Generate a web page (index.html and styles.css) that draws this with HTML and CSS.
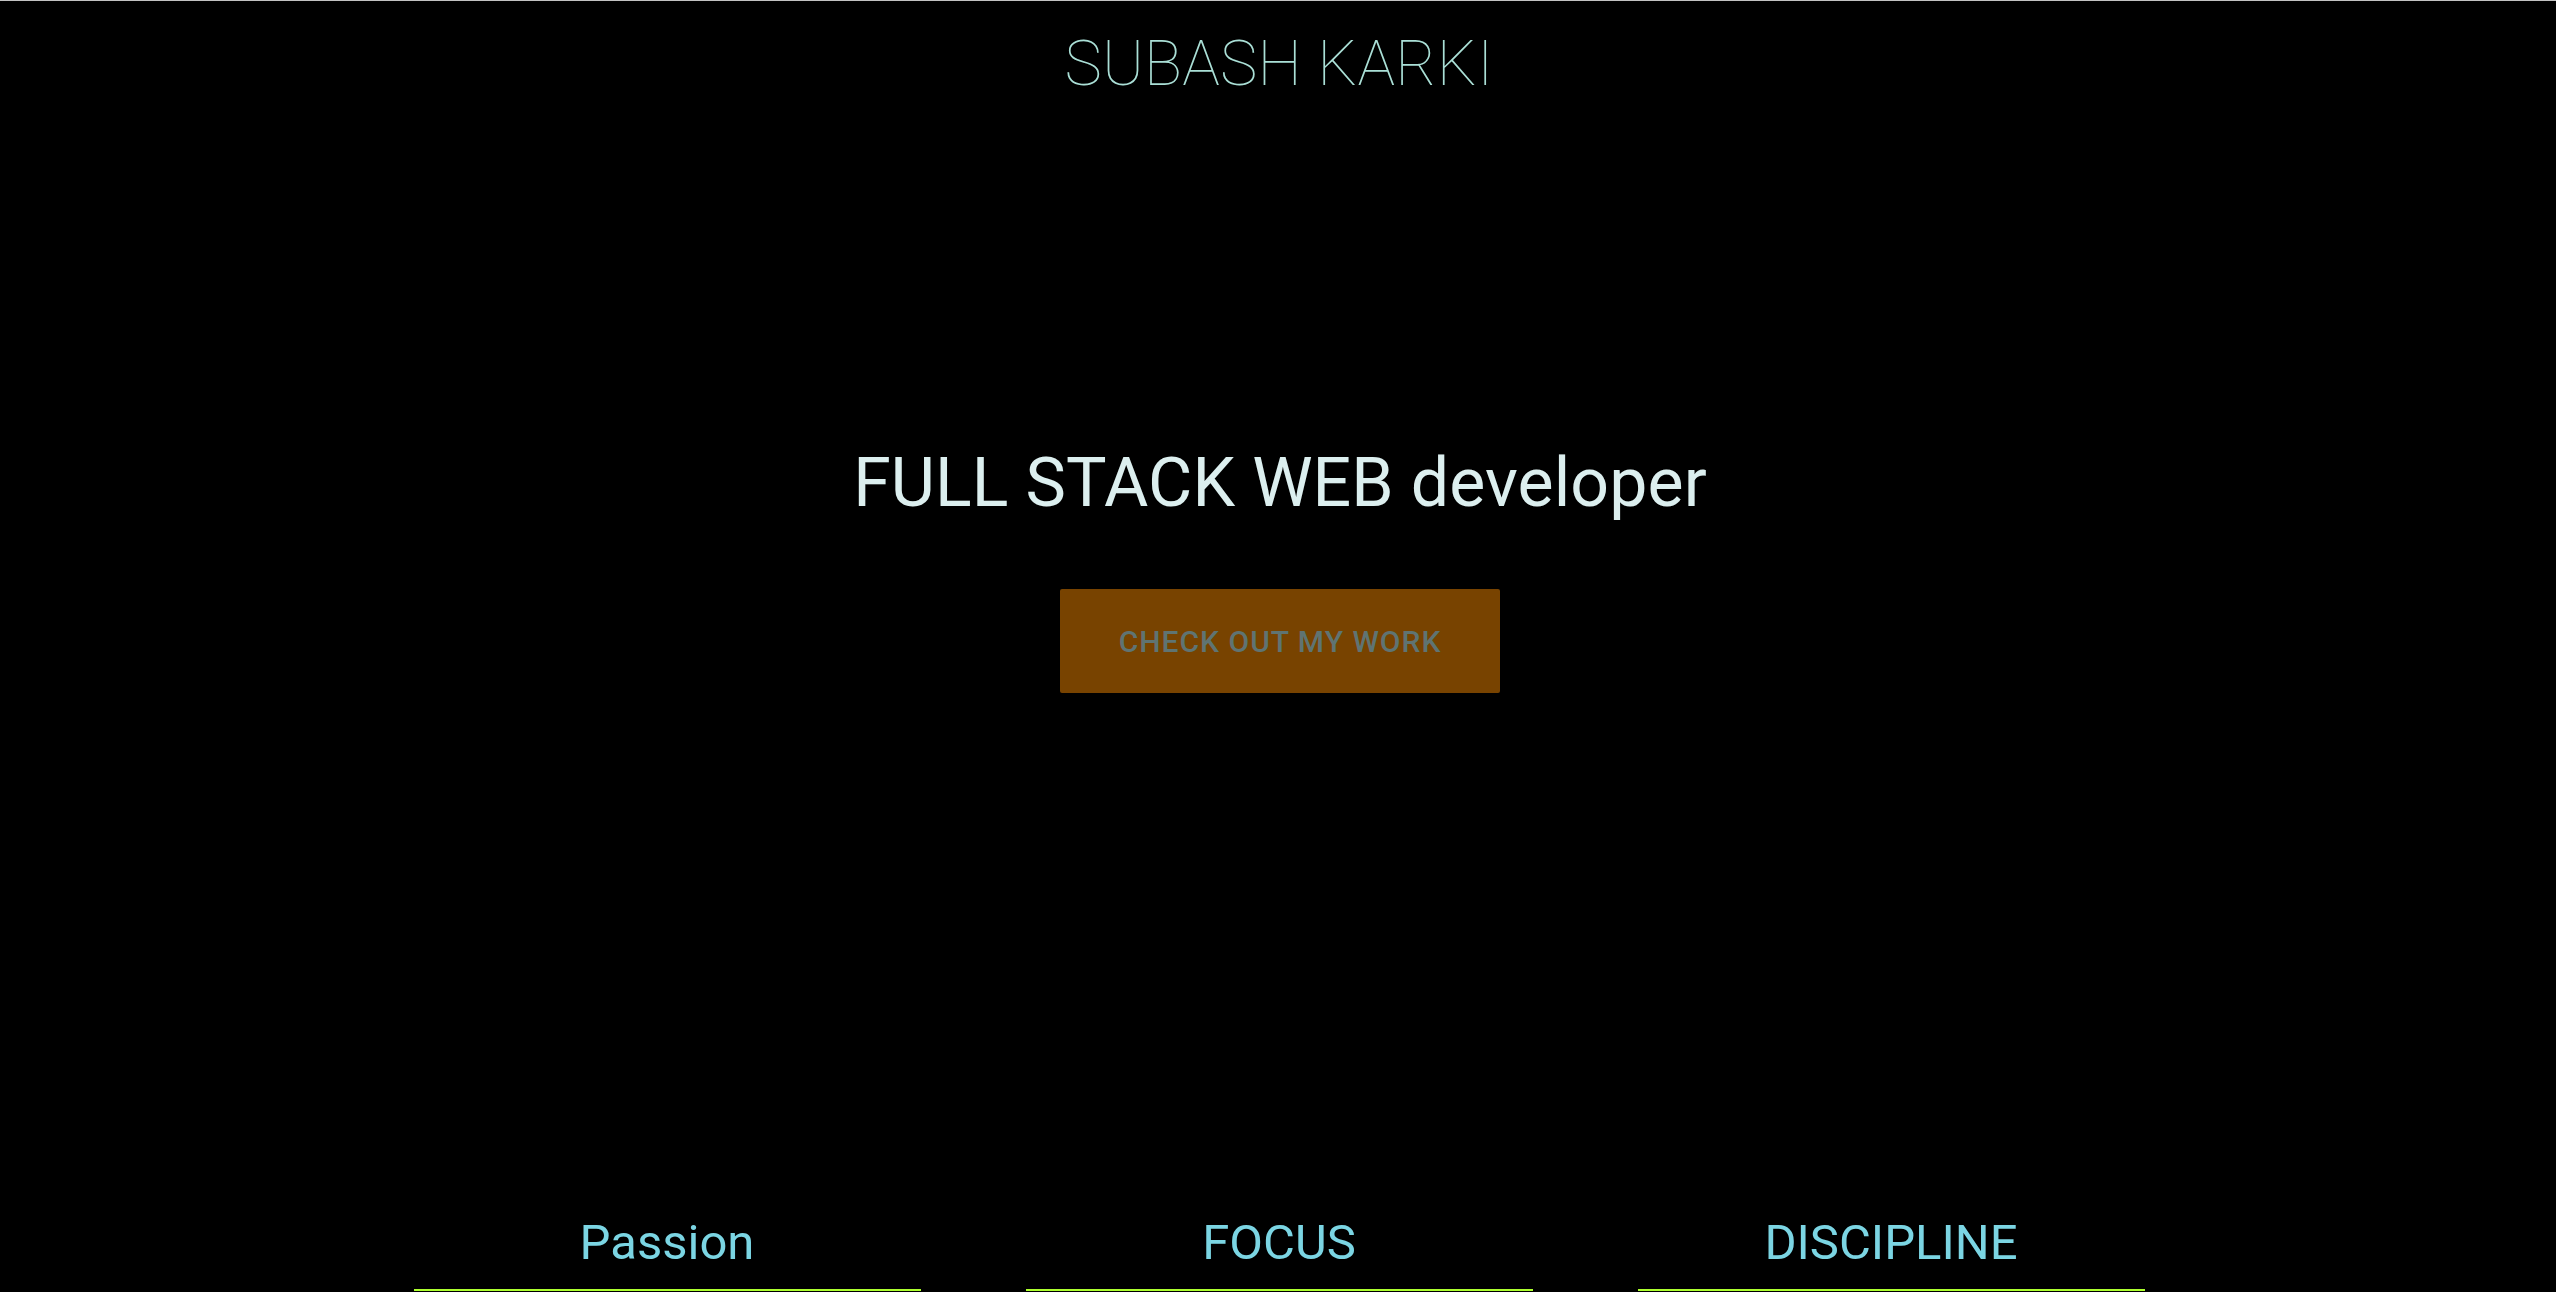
FILE: index.html
```html
<!DOCTYPE html>
<html lang="en">
<head>
<meta charset="utf-8">
<title>Subash Karki</title>
<link rel="stylesheet" href="styles.css">
</head>
<body>
<header class="site-header">
  <h1 class="brand">SUBASH KARKI</h1>
</header>
<main>
  <section class="hero">
    <h2 class="hero-title">FULL STACK WEB developer</h2>
    <a class="hero-btn" href="#work">CHECK OUT MY WORK</a>
  </section>
  <section class="values">
    <div class="value"><h3 class="value-title">Passion</h3></div>
    <div class="value"><h3 class="value-title">FOCUS</h3></div>
    <div class="value"><h3 class="value-title">DISCIPLINE</h3></div>
  </section>
</main>
</body>
</html>
```
FILE: styles.css
```css
html, body {
  margin: 0;
  padding: 0;
  background: #000;
}
body {
  border-top: 1px solid #c2c2c2;
  font-family: Roboto, "Liberation Sans", sans-serif;
  color: #dcefef;
  overflow: hidden;
}
.site-header {
  padding-top: 25px;
  text-align: center;
}
.brand {
  margin: 0;
  font-size: 63px;
  font-weight: 100;
  line-height: 76px;
  color: #aadfd6;
  letter-spacing: 0.2px;
  padding-left: 2px;
}
.hero {
  display: flex;
  flex-direction: column;
  align-items: center;
  margin-top: 341px;
  padding-left: 4px;
}
.hero-title {
  margin: 0;
  font-size: 68px;
  font-weight: 400;
  line-height: 81px;
  color: #dcefef;
  letter-spacing: 0.1px;
}
.hero-btn {
  display: flex;
  align-items: center;
  justify-content: center;
  margin-top: 65px;
  width: 440px;
  height: 104px;
  background: #784300;
  border-radius: 2px;
  color: #5f7472;
  font-size: 30px;
  font-weight: 500;
  letter-spacing: 1px;
  text-decoration: none;
}
.values {
  display: grid;
  grid-template-columns: repeat(3, 507px);
  column-gap: 105px;
  justify-content: center;
  margin-top: 520px;
  padding-left: 2px;
}
.value-title {
  margin: 0;
  padding-bottom: 17px;
  border-bottom: 2px solid #adff2f;
  text-align: center;
  font-size: 49px;
  font-weight: 400;
  line-height: 59px;
  color: #7bd5e3;
}
```
